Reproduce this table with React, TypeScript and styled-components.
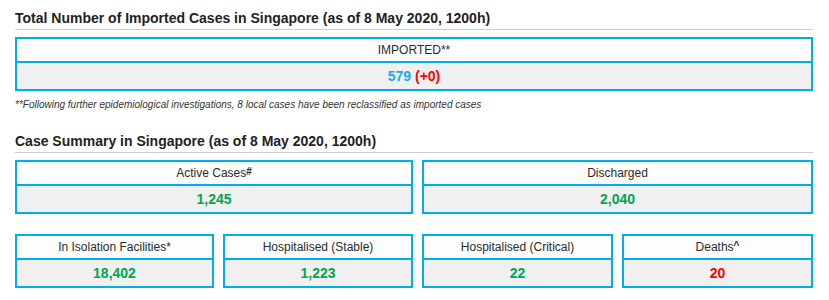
import React from "react";
import styled, { createGlobalStyle } from "styled-components";

const GlobalStyle = createGlobalStyle`
  html, body {
    margin: 0;
    padding: 0;
    background: #ffffff;
  }
  body {
    font-family: "Liberation Sans", Arial, sans-serif;
    color: #333333;
  }
`;

const Page = styled.main`
  width: 798px;
  padding: 9px 16px 0 15px;
`;

const SectionTitle = styled.h2<{ $top?: number }>`
  margin: ${(p) => p.$top ?? 0}px 0 7px;
  padding: 0 0 2px;
  font-size: 14px;
  line-height: 18px;
  font-weight: bold;
  color: #222222;
  border-bottom: 1px solid #cccccc;
`;

const Row = styled.div<{ $cols: string }>`
  display: grid;
  grid-template-columns: ${(p) => p.$cols};
  column-gap: 9px;
  margin-bottom: 20px;
`;

const Card = styled.div`
  border: 2px solid #00aeef;
  display: flex;
  flex-direction: column;
`;

const CardHead = styled.div`
  height: 22px;
  display: flex;
  align-items: center;
  justify-content: center;
  background: #fdfdfd;
  border-bottom: 2px solid #00aeef;
  font-size: 12px;
  color: #2b2b2b;
`;

const CardValue = styled.div`
  height: 26px;
  display: flex;
  align-items: center;
  justify-content: center;
  background: #f0f0f0;
  font-size: 14px;
  font-weight: bold;
`;

const Num = styled.span<{ $tone: "green" | "red" | "blue" }>`
  color: ${(p) =>
    p.$tone === "green" ? "#00a651" : p.$tone === "red" ? "#ff0000" : "#1fa8e6"};
`;

const Sup = styled.sup`
  font-size: 10px;
  font-weight: bold;
  line-height: 0;
  position: relative;
  top: -1px;
`;

const Note = styled.p`
  margin: 7px 0 0;
  font-size: 10px;
  line-height: 14px;
  font-style: italic;
  color: #333333;
`;

type Stat = {
  label: React.ReactNode;
  value: string;
  tone: "green" | "red";
};

const summaryTop: Stat[] = [
  { label: <>Active Cases<Sup>#</Sup></>, value: "1,245", tone: "green" },
  { label: "Discharged", value: "2,040", tone: "green" },
];

const summaryBottom: Stat[] = [
  { label: "In Isolation Facilities*", value: "18,402", tone: "green" },
  { label: "Hospitalised (Stable)", value: "1,223", tone: "green" },
  { label: "Hospitalised (Critical)", value: "22", tone: "green" },
  { label: <>Deaths<Sup>^</Sup></>, value: "20", tone: "red" },
];

const StatCard = ({ stat }: { stat: Stat }) => (
  <Card>
    <CardHead>{stat.label}</CardHead>
    <CardValue>
      <Num $tone={stat.tone}>{stat.value}</Num>
    </CardValue>
  </Card>
);

export default function App() {
  return (
    <>
      <GlobalStyle />
      <Page>
        <SectionTitle>
          Total Number of Imported Cases in Singapore (as of 8 May 2020, 1200h)
        </SectionTitle>
        <Card>
          <CardHead>IMPORTED**</CardHead>
          <CardValue>
            <Num $tone="blue">579</Num>&nbsp;<Num $tone="red">(+0)</Num>
          </CardValue>
        </Card>
        <Note>
          **Following further epidemiological investigations, 8 local cases have
          been reclassified as imported cases
        </Note>

        <SectionTitle $top={20}>
          Case Summary in Singapore (as of 8 May 2020, 1200h)
        </SectionTitle>
        <Row $cols="398px 391px">
          {summaryTop.map((s, i) => (
            <StatCard key={i} stat={s} />
          ))}
        </Row>
        <Row $cols="199px 190px 191px 191px">
          {summaryBottom.map((s, i) => (
            <StatCard key={i} stat={s} />
          ))}
        </Row>
      </Page>
    </>
  );
}
